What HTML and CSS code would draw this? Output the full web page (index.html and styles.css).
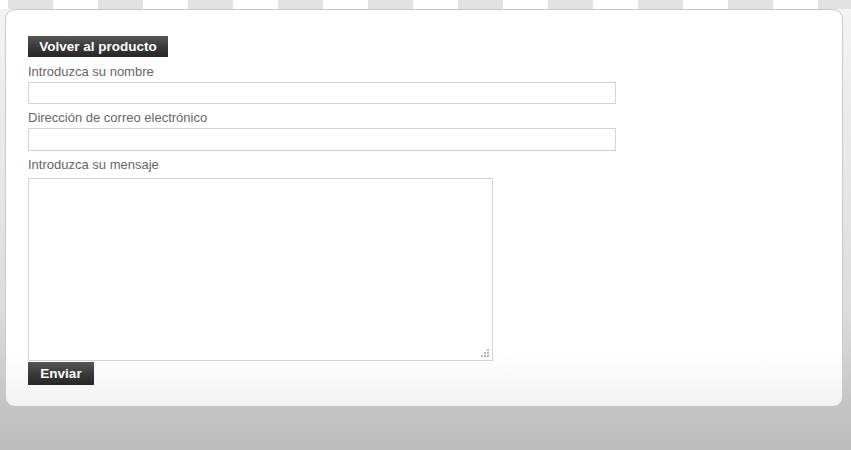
FILE: index.html
```html
<!DOCTYPE html>
<html lang="es">

<head>
    <meta charset="UTF-8">
    <meta name="viewport" content="width=device-width, initial-scale=1.0">
    <title>Contacto</title>
    <link rel="stylesheet" href="styles.css">
</head>

<body>
    <div class="stripes"></div>
    <div class="container">
        <a href="#" class="dark-button back-button">Volver al producto</a>
        <form action="#" method="POST" class="contact-form">
            <label for="nombre">Introduzca su nombre</label>
            <input type="text" id="nombre" name="nombre" class="field">

            <label for="correo">Dirección de correo electrónico</label>
            <input type="text" id="correo" name="correo" class="field field-mail">

            <label for="mensaje">Introduzca su mensaje</label>
            <div class="textarea-wrap">
                <textarea id="mensaje" name="mensaje"></textarea>
                <svg class="grip" width="10" height="10" viewBox="0 0 10 10">
                    <rect x="7" y="1" width="2" height="2" fill="#b5b5b5" />
                    <rect x="4" y="4" width="2" height="2" fill="#b5b5b5" />
                    <rect x="7" y="4" width="2" height="2" fill="#b5b5b5" />
                    <rect x="1" y="7" width="2" height="2" fill="#b5b5b5" />
                    <rect x="4" y="7" width="2" height="2" fill="#b5b5b5" />
                    <rect x="7" y="7" width="2" height="2" fill="#b5b5b5" />
                </svg>
            </div>

            <button type="submit" class="dark-button send-button">Enviar</button>
        </form>
    </div>
</body>

</html>
```

FILE: styles.css
```css
html,
body {
    height: 100%;
}

body {
    font-family: Arial, "Liberation Sans", sans-serif;
    margin: 0;
    padding: 0;
    overflow: hidden;
    background: linear-gradient(to bottom, #f4f4f4 0%, #dcdcdc 70%, #c4c4c4 90%, #bdbdbd 100%);
}

/* franja superior a cuadros */
.stripes {
    height: 9px;
    background: repeating-linear-gradient(to right,
            #ffffff 0px, #ffffff 8px,
            #e2e2e2 8px, #e2e2e2 53px,
            #ffffff 53px, #ffffff 90px);
}

.container {
    width: 814px;
    height: 370px;
    margin-left: 5px;
    padding: 26px 0 0 22px;
    border: 1px solid #c9c9c9;
    border-radius: 10px;
    background: linear-gradient(to bottom, #ffffff 0%, #ffffff 86%, #f2f2f2 100%);
}

.dark-button {
    display: inline-block;
    box-sizing: border-box;
    height: 21px;
    padding: 0 12px;
    font-family: Arial, "Liberation Sans", sans-serif;
    font-size: 13.5px;
    font-weight: bold;
    line-height: 21px;
    color: #fff;
    text-decoration: none;
    border: none;
    background: linear-gradient(to bottom, #555 0%, #383838 55%, #262626 100%);
    cursor: pointer;
}

.back-button {
    width: 140px;
    text-align: center;
    padding: 0;
}

.contact-form {
    display: flex;
    flex-direction: column;
    align-items: flex-start;
}

.contact-form label {
    font-size: 13px;
    line-height: 16px;
    color: #666;
    margin-top: 7px;
    margin-bottom: 2px;
}

.field {
    box-sizing: border-box;
    width: 588px;
    height: 22px;
    margin: 0;
    border: 1px solid #d4d4d4;
    background-color: #fff;
}

.field-mail {
    height: 23px;
}

.field + label {
    margin-top: 6px;
}

.textarea-wrap {
    position: relative;
    margin-top: 3px;
}

.textarea-wrap textarea {
    display: block;
    box-sizing: border-box;
    width: 465px;
    height: 183px;
    margin: 0;
    border: 1px solid #d4d4d4;
    resize: none;
    background-color: #fff;
}

.grip {
    position: absolute;
    right: 3px;
    bottom: 3px;
}

.send-button {
    width: 66px;
    height: 23px;
    line-height: 23px;
    padding: 0;
    margin-top: 1px;
}
```
